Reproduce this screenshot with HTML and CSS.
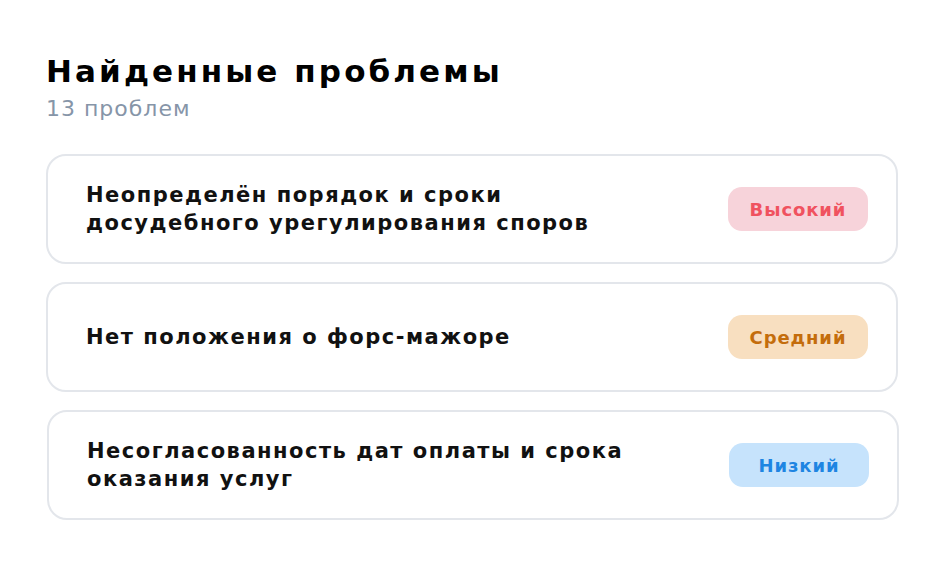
FILE: index.html
```html
<!DOCTYPE html>
<html lang="ru">
<head>
  <meta charset="UTF-8">
  <meta name="viewport" content="width=device-width, initial-scale=1.0">
  <title>Найденные проблемы</title>
  <link rel="stylesheet" href="styles.css">
</head>
<body>

  <div class="header">
    <h1>Найденные проблемы</h1>
    <div class="count">13 проблем</div>
  </div>

  <div class="issues">
    <div class="issue">
      <div class="issue-title">Неопределён порядок и сроки досудебного урегулирования споров</div>
      <span class="badge high">Высокий</span>
    </div>
    <div class="issue">
      <div class="issue-title">Нет положения о форс-мажоре</div>
      <span class="badge medium">Средний</span>
    </div>
    <div class="issue shifted">
      <div class="issue-title">Несогласованность дат оплаты и срока оказания услуг</div>
      <span class="badge low">Низкий</span>
    </div>
  </div>

</body>
</html>
```
FILE: styles.css
```css
body {
  margin: 0;
  padding: 52px 46px 0;
  font-family: "DejaVu Sans", sans-serif;
  background: #fff;
  color: #111;
}

h1 {
  margin: 0;
  font-size: 31px;
  line-height: 38px;
  font-weight: 700;
  letter-spacing: 3.1px;
  color: #000;
}

.count {
  margin-top: 6px;
  font-size: 22px;
  line-height: 26px;
  color: #8695a8;
  letter-spacing: 1px;
}

.issues {
  margin-top: 32px;
  display: flex;
  flex-direction: column;
  gap: 18px;
}

.issue {
  box-sizing: border-box;
  height: 110px;
  border: 2px solid #e3e6eb;
  border-radius: 20px;
  padding: 0 28px 0 38px;
  display: flex;
  align-items: center;
  justify-content: space-between;
}

.issue.shifted {
  transform: translateX(1px);
}

.issue-title {
  max-width: 560px;
  font-size: 21px;
  line-height: 28px;
  font-weight: 700;
  letter-spacing: 1.5px;
}

.badge {
  width: 140px;
  height: 44px;
  border-radius: 14px;
  display: flex;
  align-items: center;
  justify-content: center;
  font-size: 18px;
  font-weight: 700;
  letter-spacing: 0.9px;
}

.high { background: #f7d3da; color: #f0525f; }
.medium { background: #f8dfc0; color: #c46d0c; }
.low { background: #c6e3fc; color: #1e85e2; }
```
